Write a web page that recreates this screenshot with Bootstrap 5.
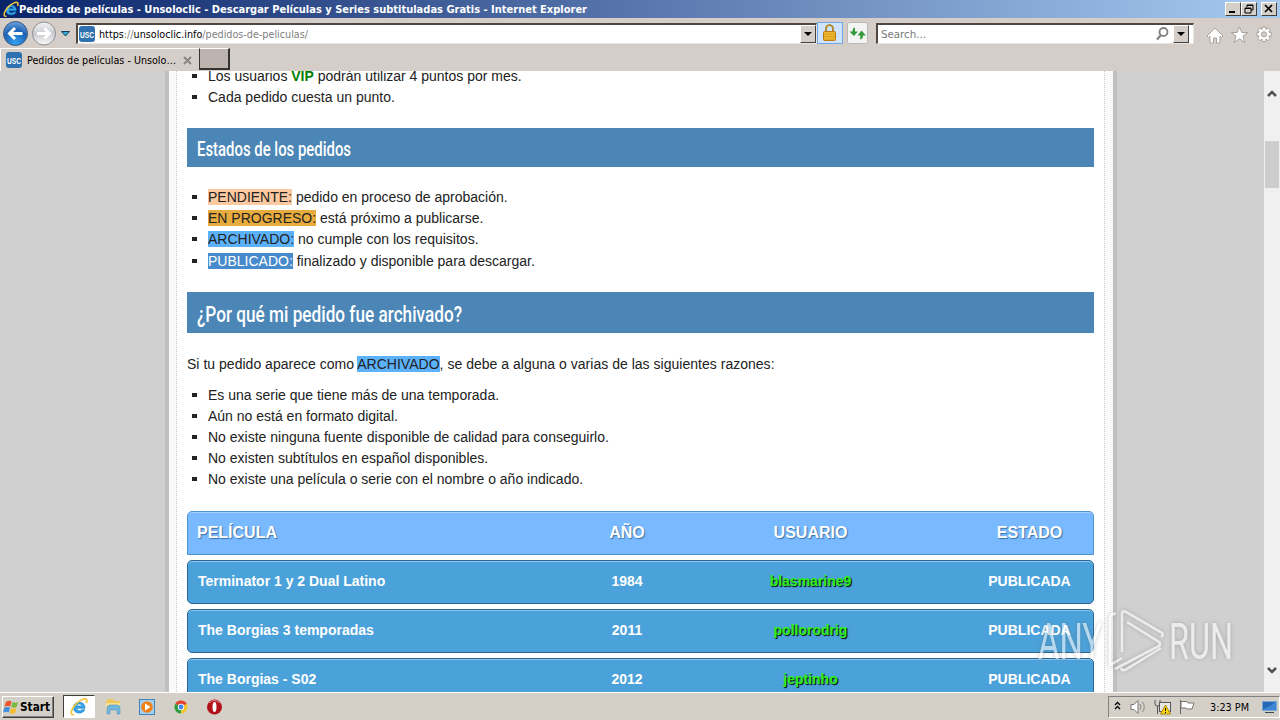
<!DOCTYPE html>
<html lang="es">
<head>
    <meta charset="UTF-8">
    <meta name="viewport" content="width=device-width, initial-scale=1.0">
    <title>Pedidos de películas - Unsoloclic</title>
    <link href="https://cdn.jsdelivr.net/npm/bootstrap@5.3.3/dist/css/bootstrap.min.css" rel="stylesheet">
    <script src="https://cdn.jsdelivr.net/npm/bootstrap@5.3.3/dist/js/bootstrap.bundle.min.js"></script>
    <style>
        body { width: 1280px; height: 720px; background: #d4d0c8; font-family: "Liberation Sans", sans-serif; font-size: 14px; letter-spacing: 0; line-height: 21px; color: #222; }
        svg { display: block; flex: none; }
        .ui-font { font-family: "DejaVu Sans Condensed", "DejaVu Sans", sans-serif; font-stretch: condensed; font-size: 11px; line-height: 14px; color: #000; white-space: nowrap; }
        .titlebar { height: 18px; background: linear-gradient(90deg, #0a246a, #a6caf0); padding: 0 3px 0 3px; }
        .win-btn { width: 16px; height: 14px; background: #d4d0c8; border: 1px solid; border-color: #fff #404040 #404040 #fff; }
        .toolbar { height: 30px; background: #d5cec8; padding-left: 2px; }
        .field { height: 21px; background: #fff; border: 1px solid #e8e4e0; border-top: 2px solid #504840; border-left: 2px solid #504840; }
        .field-url { width: 741px; }
        .field-search { width: 318px; }
        .drop-btn { width: 16px; height: 18px; background: #d5cec8; border: 1px solid; border-color: #fff #404040 #404040 #fff; }
        .tabs-row { height: 23px; background: #d5cec8; }
        .tab-item { width: 199px; height: 23px; border-top: 1px solid #fff; border-left: 1px solid #fff; padding-left: 5px; }
        .tab-new { width: 31px; height: 22px; background: #bdb4af; border: 1px solid #333; border-top-color: #fff; border-right-width: 2px; border-bottom-width: 2px; }
        .viewport { height: 621px; background: #d0d0d0; }
        .page-box { width: 952px; margin-left: 165px; border: solid #c0c0c0; border-width: 0 4px; background: #fafafa; padding: 0 8px 0 7px; }
        .page-inner { height: 621px; background: #fff; border: dotted #c8c8c8; border-width: 0 1px; padding: 0 10px; overflow: hidden; }
        .sq-list { list-style: none; margin: 0; padding: 0 0 0 21px; }
        .sq-list li::before { content: ""; float: left; width: 5px; height: 4px; margin: 8px 0 0 -16px; background: #222; }
        .rules { margin-top: -5px; }
        .vip { color: #008000; }
        .states { position: relative; top: .5px; }
        .states li { height: 21.25px; }
        .states li:last-child { padding-top: .5px; }
        .bar-title { background: #4b86b6; height: 39px; margin: 20px 0 19px; }
        .bar-big { height: 41px; margin: 21px 0; }
        .intro { margin-bottom: 10px; letter-spacing: .02px; }
        .reasons { margin-bottom: 21px; }
        .pend { background: #fdc9a0; }
        .prog { background: #e8ab3d; }
        .arch { background: #5cb1fb; }
        .publ { background: #488bcc; color: #fff; }
        .req-row { display: grid; grid-template-columns: 411px 58px 309px 129px; height: 44px; align-items: center; text-align: center; margin: 0 0 5px; border: 1px solid #2c6696; border-radius: 5px; background: #4ba2da; box-shadow: inset 0 1px 0 #8cc8ee; color: #fff; font-weight: bold; font-size: 14px; line-height: 40px; padding-bottom: 2px; }
        .req-row > div { white-space: nowrap; margin: 0 -20px 0 -22px; }
        .req-row > div:first-child { text-align: left; margin: 0; padding-left: 10px; }
        .req-head { background: #78b9ff; border-color: #4e94d0; border-radius: 5px 5px 0 0; font-size: 16px; padding-bottom: 0; text-shadow: 1px 1px 1px #3a73a8; box-shadow: inset 0 1px 0 #a5d2ff; }
        .req-head > div:first-child { padding-left: 9px; }
        .usr { color: #2df01c; text-shadow: 1px 1px 1px #000; }
        .scrollbar { width: 16px; background: #f0f0f0; }
        .thumb { width: 14px; height: 47px; background: #cdcdcd; }
        .taskbar { height: 28px; background: #d4d0c8; border-top: 1px solid #fff; padding-left: 2px; }
        .start-btn { width: 52px; height: 22px; border: 1px solid; border-color: #fff #404040 #404040 #fff; box-shadow: inset -1px -1px #808080; }
        .task-active { width: 32px; height: 23px; margin-left: 9px; background: #fff; border: 1px solid; border-color: #404040 #fff #fff #404040; }
        .tray { width: 172px; height: 22px; border: 1px solid; border-color: #808080 #fff #fff #808080; }
        .watermark { left: 1030px; top: 605px; opacity: .6; filter: drop-shadow(0 0 2px rgba(90, 90, 90, .6)); }
    </style>
</head>
<body class="overflow-hidden">
    <svg width="0" height="0" class="position-absolute">
        <symbol id="ie" viewBox="0 0 16 16">
            <path d="M13.300 9.200H6c.1 2.600 3.500 2.700 4.300 1.200h2.800C11.700 14.700 3 14.700 3 8.500 3 2 14 2 13.300 9.200zM6 7.100h4.500c-.2-2.300-4.200-2.300-4.500 0z" fill="#35a5ea" stroke="#1779c4" stroke-width=".5"/>
            <path d="M3.500 14.700C.2 15.500.2 11.500 4.300 6.500 8.300 1.900 13.500-.3 14.800 1.500c.5.900 0 2.300-.4 3" fill="none" stroke="#f0c83c" stroke-width="1.500"/>
        </symbol>
        <symbol id="usc" viewBox="0 0 16 16">
            <rect width="16" height="16" rx="3" fill="#2e71ae"/>
            <text x="1" y="11.500" font-family="Liberation Sans, sans-serif" font-size="9.500" font-weight="bold" fill="#fff" textLength="14" lengthAdjust="spacingAndGlyphs">USC</text>
        </symbol>
    </svg>

    <div class="titlebar d-flex align-items-center ui-font">
        <svg width="16" height="17"><use href="#ie"/></svg>
        <svg width="580" height="18"><text x="0" y="13" font-size="11" font-weight="bold" fill="#fff" textLength="568" lengthAdjust="spacingAndGlyphs">Pedidos de películas - Unsoloclic - Descargar Películas y Series subtituladas Gratis - Internet Explorer</text></svg>
        <div class="d-flex ms-auto">
            <div class="win-btn"><svg width="14" height="12"><path d="M3 9h6" stroke="#000" stroke-width="2"/></svg></div>
            <div class="win-btn"><svg width="14" height="12"><path d="M5 4V2h6v5H9M5 2.500h6M3 5h6v5H3zM3 5.500h6" fill="none" stroke="#000"/></svg></div>
            <div class="win-btn ms-1"><svg width="14" height="12"><path d="M3 2l7 7M10 2L3 9" stroke="#000" stroke-width="1.700"/></svg></div>
        </div>
    </div>

    <div class="toolbar d-flex align-items-center ui-font">
        <svg width="74" height="30">
            <defs>
                <radialGradient id="back" cx=".5" cy=".9" r=".9"><stop offset="0" stop-color="#36a1ef"/><stop offset=".6" stop-color="#1c62b4"/><stop offset="1" stop-color="#6fa5dc"/></radialGradient>
                <linearGradient id="fwd" x2="0" y2="1"><stop offset="0" stop-color="#f5f5f5"/><stop offset=".5" stop-color="#c8cbd0"/><stop offset="1" stop-color="#fafafa"/></linearGradient>
            </defs>
            <circle cx="13.500" cy="15.500" r="12" fill="url(#back)" stroke="#40587c"/>
            <path d="M20.500 15.500H8M13 10l-5.500 5.500L13 21" fill="none" stroke="#fff" stroke-width="3"/>
            <circle cx="42" cy="15.500" r="11.500" fill="url(#fwd)" stroke="#8c8c8c"/>
            <path d="M35 15.500h12M42.500 10.500l5 5-5 5" fill="none" stroke="#fff" stroke-width="3"/>
            <path d="M59.500 13.500h8l-4 4.500z" fill="#35a7d0" stroke="#17415f"/>
        </svg>
        <div class="field field-url d-flex align-items-center">
            <svg width="21" height="16"><use href="#usc" width="16" height="16" x="1"/></svg>
            <svg width="230" height="18"><text y="13" font-size="11" textLength="209" lengthAdjust="spacingAndGlyphs" fill="#808080"><tspan fill="#000">https</tspan>://<tspan fill="#000">unsoloclic.info</tspan>/pedidos-de-peliculas/</text></svg>
            <div class="drop-btn ms-auto"><svg width="14" height="16"><path d="M3 6h8l-4 4z"/></svg></div>
        </div>
        <svg width="59" height="30">
            <rect x=".5" y="4.500" width="25" height="21" fill="#cfe4fb" stroke="#6ea6e6"/>
            <path d="M9 14v-3a3.500 4 0 0 1 7 0v3" fill="none" stroke="#b08b32" stroke-width="2"/>
            <rect x="6.500" y="13.500" width="12" height="9" rx="1" fill="#efb52b" stroke="#b97a10"/>
            <path d="M7 16h11M7 18.500h11M7 21h11" stroke="#d19a22" stroke-width=".7"/>
            <rect x="30.500" y="4.500" width="20" height="21" rx="2" fill="#f4f4f2" stroke="#b8b8b8"/>
            <path d="M38 9.500c-2 .5-2.500 2-2.500 4h-3l4.500 4.500 4-4.500h-3zM43 21.500c2.500-.5 3-2 3-4h3l-4.500-5-4 5h3z" fill="#33993b"/>
        </svg>
        <div class="field field-search d-flex align-items-center">
            <svg width="70" height="18"><text x="3" y="13" font-size="11" fill="#777" textLength="45" lengthAdjust="spacingAndGlyphs">Search...</text></svg>
            <svg class="ms-auto me-1" width="14" height="16"><circle cx="8.500" cy="6" r="4" fill="none" stroke="#808080" stroke-width="1.800"/><path d="M6 9l-4 4.500" stroke="#808080" stroke-width="2.200"/></svg>
            <div class="drop-btn me-1"><svg width="14" height="16"><path d="M3 6h8l-4 4z"/></svg></div>
        </div>
        <svg width="84" height="30" fill="#fff" stroke="#a09a95" stroke-width=".9">
            <path d="M21 10l8 8-1.500 1.500L26 18v7h-3.500v-5h-3v5H16v-7l-1.500 1.500L13 18z"/>
            <path d="M45.500 9l2.300 5.500h5.900L49 18l1.800 6.500-5.300-3.800-5.300 3.800L42 18l-4.700-3.500h5.900z"/>
            <path d="M68.500 9h3l.5 2.500 2-1.600 2.300 2.200-1.600 2 2.600.5v3.200l-2.600.5 1.600 2.100-2.300 2.200-2-1.600-.5 2.600h-3l-.5-2.600-2 1.600-2.300-2.200 1.600-2.100-2.400-.5v-3.200l2.400-.5-1.600-2 2.300-2.200 2 1.600z"/>
            <circle cx="70" cy="16.300" r="2.600" fill="#d5cec8"/>
        </svg>
    </div>

    <div class="tabs-row d-flex ui-font">
        <div class="tab-item d-flex align-items-center">
            <svg width="17" height="16"><use href="#usc" width="16" height="16"/></svg>
            <svg class="ms-1" width="155" height="20"><text x="0" y="14" font-size="11" fill="#000" textLength="149" lengthAdjust="spacingAndGlyphs">Pedidos de películas - Unsolo…</text></svg>
            <svg width="10" height="10"><path d="M2 2l7 7M9 2L2 9" stroke="#8b8580" stroke-width="2"/></svg>
        </div>
        <div class="tab-new"></div>
    </div>

    <div class="viewport d-flex">
        <main class="page-box">
            <div class="page-inner">
                <ul class="sq-list rules">
                    <li>Los usuarios <b class="vip">VIP</b> podrán utilizar 4 puntos por mes.</li>
                    <li>Cada pedido cuesta un punto.</li>
                </ul>
                <div class="bar-title">
                    <svg width="400" height="39"><text x="10" y="27.500" font-family="Roboto, sans-serif" font-size="20.500" font-weight="500" fill="#fff" textLength="154" lengthAdjust="spacingAndGlyphs">Estados de los pedidos</text></svg>
                </div>
                <ul class="sq-list states">
                    <li><span class="pend">PENDIENTE:</span> pedido en proceso de aprobación.</li>
                    <li><span class="prog">EN PROGRESO:</span> está próximo a publicarse.</li>
                    <li><span class="arch">ARCHIVADO:</span> no cumple con los requisitos.</li>
                    <li><span class="publ">PUBLICADO:</span> finalizado y disponible para descargar.</li>
                </ul>
                <div class="bar-title bar-big">
                    <svg width="400" height="41"><text x="10" y="29.500" font-family="Roboto, sans-serif" font-size="22.500" font-weight="500" fill="#fff" textLength="265" lengthAdjust="spacingAndGlyphs">¿Por qué mi pedido fue archivado?</text></svg>
                </div>
                <p class="intro">Si tu pedido aparece como <span class="arch">ARCHIVADO</span>, se debe a alguna o varias de las siguientes razones:</p>
                <ul class="sq-list reasons">
                    <li>Es una serie que tiene más de una temporada.</li>
                    <li>Aún no está en formato digital.</li>
                    <li>No existe ninguna fuente disponible de calidad para conseguirlo.</li>
                    <li>No existen subtítulos en español disponibles.</li>
                    <li>No existe una película o serie con el nombre o año indicado.</li>
                </ul>
                <div class="req-row req-head"><div>PELÍCULA</div><div>AÑO</div><div>USUARIO</div><div>ESTADO</div></div>
                <div class="req-row"><div>Terminator 1 y 2 Dual Latino</div><div>1984</div><div class="usr">blasmarine9</div><div>PUBLICADA</div></div>
                <div class="req-row"><div>The Borgias 3 temporadas</div><div>2011</div><div class="usr">pollorodrig</div><div>PUBLICADA</div></div>
                <div class="req-row"><div>The Borgias - S02</div><div>2012</div><div class="usr">jeptinho</div><div>PUBLICADA</div></div>
            </div>
        </main>
        <div class="scrollbar ms-auto d-flex flex-column align-items-center">
            <svg width="16" height="70"><path d="M4 25l4-4 4 4" fill="none" stroke="#505050" stroke-width="2.500"/></svg>
            <div class="thumb"></div>
            <svg class="mt-auto" width="16" height="30"><path d="M4 6l4 4 4-4" fill="none" stroke="#505050" stroke-width="2.500"/></svg>
        </div>
    </div>

    <div class="taskbar d-flex align-items-center ui-font">
        <div class="start-btn d-flex align-items-center">
            <svg width="17" height="18" viewBox="0 0 17 18">
                <path d="M3 4q3-2 5.500-.5L7.300 8.500Q5 7.300 1.500 8.700z" fill="#e8552c"/><path d="M9.500 4q3 1.500 5.500-.3l-1.300 5Q11 10.500 8.300 9z" fill="#7db93e"/>
                <path d="M1.300 9.700Q4.500 8.300 7 9.500l-1.200 5Q3.500 13 0 14.500z" fill="#3d8fdc"/><path d="M8 10q3 1.500 5.500-.2l-1.300 4.900q-3 2-5.400.3z" fill="#f5bb2d"/>
            </svg>
            <svg width="32" height="18"><text x="0" y="13" font-size="11.500" font-weight="bold" textLength="30" lengthAdjust="spacingAndGlyphs">Start</text></svg>
        </div>
        <div class="task-active d-flex justify-content-center align-items-center"><svg width="18" height="18"><use href="#ie"/></svg></div>
        <svg width="140" height="26">
            <path d="M11 7l2-2h5l1 2h6v5H11z" fill="#eec95a"/><path d="M11 9h14v7H11z" fill="#f6df8d"/><path d="M12 20v-6q0-3 3-3h7q3 0 3 3v6h-3v-4h-7v4z" fill="#72b5dc" stroke="#5a9cc8" stroke-width=".6"/>
            <rect x="44.500" y="5.500" width="15" height="15" fill="#a5cfee" stroke="#4383bd"/><circle cx="52" cy="13" r="5.800" fill="#f08017"/><path d="M50 9.500l5.500 3.500-5.500 3.500z" fill="#fff"/>
            <circle cx="86" cy="13" r="6.500" fill="#f5c62b"/><path d="M86 13L80.400 9.700A6.500 6.500 0 0 1 91.600 9.700z" fill="#df4134"/><path d="M86 13L80.400 9.700A6.500 6.500 0 0 0 86 19.500z" fill="#2d9d4b"/><circle cx="86" cy="13" r="3.200" fill="#fff"/><circle cx="86" cy="13" r="2.400" fill="#4285e8"/>
            <circle cx="119.500" cy="13" r="7.500" fill="#b01218"/><ellipse cx="119.500" cy="13" rx="2" ry="5" fill="#fff"/><path d="M114 9q5-5 11 0" stroke="#e8898b" fill="none"/>
        </svg>
        <div class="tray ms-auto">
            <svg width="170" height="20">
                <path d="M6 8l2.500-2.500L11 8M6 12l2.500-2.500L11 12" fill="none" stroke="#000" stroke-width="1.300"/>
                <path d="M22 7.500h3l4-4v13l-4-4h-3z" fill="#fff" stroke="#777"/><path d="M31 7q2 3 0 6M33.500 5q3.500 5 0 10" fill="none" stroke="#888"/>
                <path d="M46 3v4q0 2 2.500 2v8M51 3v4q0 2-2.500 2" stroke="#555" fill="none"/><rect x="50.500" y="5.500" width="11" height="9" fill="#e8e8e8" stroke="#555"/><path d="M56.500 8l5 9h-10z" fill="#ffd51c" stroke="#a88708"/><path d="M56.500 11v3M56.500 15v1" stroke="#000"/>
                <path d="M71.500 3v14" stroke="#666"/><path d="M72 4.500h6l1 1.500h6l-2 6h-5l-1-1h-5z" fill="#fff" stroke="#777"/>
                <text x="101" y="14" font-size="11" textLength="39" lengthAdjust="spacingAndGlyphs">3:23 PM</text>
                <path d="M153.500 4.500h14v9h-14z" fill="#2467b5" stroke="#76a6d8"/><path d="M154 12q7-2 13-8v9h-13z" fill="#3d87d2"/><path d="M156 15.500h9" stroke="#345"/>
            </svg>
        </div>
    </div>

    <svg class="watermark position-absolute" width="210" height="76" fill="#fff">
        <g font-family="Roboto, sans-serif" font-size="50">
            <text x="8" y="54" textLength="64" lengthAdjust="spacingAndGlyphs">ANY</text>
            <text x="139" y="54" textLength="64" lengthAdjust="spacingAndGlyphs">RUN</text>
        </g>
        <path d="M86 9q-6-1-6 5v46l12-7M92 47V9q0-4 4-2l36 21q2 2-1 4M97 17l32 20q2 2 0 4L85 64M131 43L95 65q-3 1-4-2" fill="none" stroke="#fff" stroke-width="2.600"/>
    </svg>
</body>
</html>
